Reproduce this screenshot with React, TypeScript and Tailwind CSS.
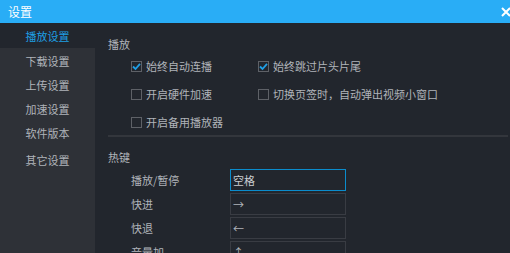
import React from 'react';

const font = { fontFamily: '"Noto Sans CJK SC", "Noto Sans", sans-serif' };

function Check({ checked, label }: { checked?: boolean; label: string }) {
  return (
    <div className="flex items-center h-[28px]">
      <span className="w-[11px] h-[11px] border border-[#5e6167] flex items-center justify-center mr-[4px] shrink-0">
        {checked && (
          <svg width="9" height="9" viewBox="0 0 9 9">
            <path d="M1 4.5 L3.5 7 L8 1.8" fill="none" stroke="#1f9fe6" strokeWidth="1.8" />
          </svg>
        )}
      </span>
      <span className="text-[11px] leading-[14px] text-[#b0b4ba] whitespace-nowrap">{label}</span>
    </div>
  );
}

function HotkeyRow({ label, value, focused }: { label: string; value: string; focused?: boolean }) {
  return (
    <div className="flex items-center h-[24px]">
      <span className="w-[99px] text-[11px] leading-[14px] text-[#b0b4ba]">{label}</span>
      <div
        className={
          'w-[116px] h-[22px] border flex items-center px-[2px] text-[11px] ' +
          (focused ? 'border-[#0b8ccc] text-[#c9ccd1]' : 'border-[#393c43] text-[#b0b4ba]')
        }
      >
        {value}
      </div>
    </div>
  );
}

export default function App() {
  const menu = ['播放设置', '下载设置', '上传设置', '加速设置', '软件版本'];

  return (
    <div className="w-[510px] h-[253px] overflow-hidden bg-[#22262d] flex flex-col" style={font}>
      <div className="h-[23px] bg-[#29adf6] flex items-center justify-between pl-[8px] shrink-0">
        <span className="text-white text-[12px] leading-[14px]">设置</span>
        <svg width="10" height="10" viewBox="0 0 10 10" className="-mr-[1px]">
          <path d="M1 1 L9 9 M9 1 L1 9" stroke="#ffffff" strokeWidth="2" />
        </svg>
      </div>

      <div className="flex flex-1 pt-[1px]">
        <div className="w-[95px] bg-[#2e3137] flex flex-col shrink-0">
          {menu.map((m, i) => (
            <div
              key={m}
              className={
                'h-[24px] flex items-center justify-center text-[11px] ' +
                (i === 0 ? 'bg-[#22262d] text-[#1e9fe4] mb-[1px]' : 'text-[#b0b4ba]')
              }
            >
              {m}
            </div>
          ))}
          <div className="h-[24px] mt-[3px] flex items-center justify-center text-[11px] text-[#b0b4ba]">其它设置</div>
        </div>

        <div className="flex-1 pl-[13px] pt-[13px] flex flex-col">
          <div className="text-[11px] leading-[14px] text-[#b0b4ba]">播放</div>
          <div className="pl-[23px] grid grid-cols-[127px_1fr] mt-[1px]">
            <Check checked label="始终自动连播" />
            <Check checked label="始终跳过片头片尾" />
            <Check label="开启硬件加速" />
            <Check label="切换页签时，自动弹出视频小窗口" />
            <Check label="开启备用播放器" />
          </div>
          <div className="h-[2px] bg-[#33363c] mr-[2px] mt-[-1px]" />
          <div className="text-[11px] leading-[14px] text-[#b0b4ba] mt-[13px]">热键</div>
          <div className="pl-[23px] mt-[4px] flex flex-col">
            <HotkeyRow label="播放/暂停" value="空格" focused />
            <HotkeyRow label="快进" value="→" />
            <HotkeyRow label="快退" value="←" />
            <HotkeyRow label="音量加" value="↑" />
          </div>
        </div>
      </div>
    </div>
  );
}
